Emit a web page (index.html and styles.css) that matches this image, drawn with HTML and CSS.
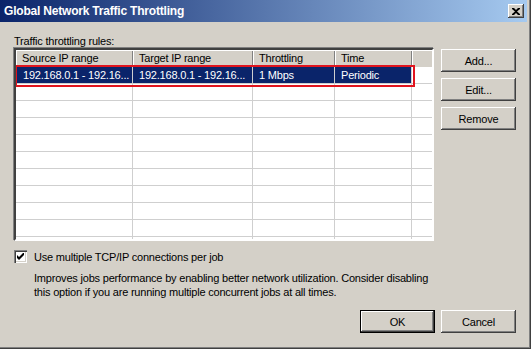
FILE: index.html
```html
<!DOCTYPE html>
<html lang="en">
<head>
  <meta charset="UTF-8" />
  <title>Global Network Traffic Throttling</title>
  <link rel="stylesheet" href="styles.css">
</head>
<body>
  <div class="window">
    <div class="titlebar">
      <span class="title">Global Network Traffic Throttling</span>
      <span class="close-btn">
        <svg width="8" height="7" viewBox="0 0 8 7"><path d="M0 0h2l2 2 2-2h2v1L5 3.5 8 6v1H6L4 5 2 7H0V6l3-2.5L0 1z" fill="#000"/></svg>
      </span>
    </div>

    <div class="content">
      <div class="caption">Traffic throttling rules:</div>

      <div class="rules">
        <div class="listview">
          <div class="row head">
            <div class="cell c1">Source IP range</div>
            <div class="cell c2">Target IP range</div>
            <div class="cell c3">Throttling</div>
            <div class="cell c4">Time</div>
            <div class="cell c5"></div>
          </div>
          <div class="row selected">
            <div class="cell c1">192.168.0.1 - 192.16...</div>
            <div class="cell c2">192.168.0.1 - 192.16...</div>
            <div class="cell c3">1 Mbps</div>
            <div class="cell c4">Periodic</div>
            <div class="cell c5"></div>
          </div>
          <div id="empty-rows"></div>
          <div class="highlight"></div>
        </div>

        <div class="side-buttons">
          <button class="btn">Add...</button>
          <button class="btn">Edit...</button>
          <button class="btn">Remove</button>
        </div>
      </div>

      <label class="option">
        <span class="checkbox">
          <svg width="7" height="7" viewBox="0 0 7 7"><path d="M0 2l2 2 5-5v2L2 6 0 4z" fill="#000"/><path d="M0 3l2 2 5-5v2L2 7 0 5z" fill="#000"/></svg>
        </span>
        Use multiple TCP/IP connections per job
      </label>
      <p class="desc">Improves jobs performance by enabling better network utilization. Consider disabling<br>this option if you are running multiple concurrent jobs at all times.</p>

      <div class="footer">
        <button class="btn default">OK</button>
        <button class="btn">Cancel</button>
      </div>
    </div>
  </div>

  <script>
    // empty grid rows under the rule list
    const holder = document.getElementById("empty-rows");
    for (let i = 0; i < 11; i++) {
      const row = document.createElement("div");
      row.className = "row";
      for (let c = 1; c <= 5; c++) {
        const cell = document.createElement("div");
        cell.className = "cell c" + c;
        row.appendChild(cell);
      }
      holder.appendChild(row);
    }
  </script>
</body>
</html>
```

FILE: styles.css
```css
* {
  box-sizing: border-box;
  margin: 0;
  padding: 0;
}
body {
  width: 531px;
  height: 349px;
  overflow: hidden;
  background: #d4d0c8;
  font-family: 'Liberation Sans', Arial, sans-serif;
  font-size: 11px;
  color: #000;
}
.window {
  width: 531px;
  height: 349px;
  background: #d4d0c8;
  padding: 0 4px 4px 0;
  box-shadow: inset -1px -1px #404040, inset -2px -2px #808080;
  display: flex;
  flex-direction: column;
}
.titlebar {
  height: 22px;
  background: linear-gradient(to right, #0a246a, #a6caf0);
  display: flex;
  align-items: center;
  justify-content: space-between;
  padding: 0 3px 0 4px;
}
.title {
  color: #fff;
  font-weight: bold;
  font-size: 12px;
  letter-spacing: -0.2px;
}
.close-btn {
  width: 16px;
  height: 14px;
  background: #d4d0c8;
  display: flex;
  align-items: center;
  justify-content: center;
  box-shadow: inset -1px -1px #404040, inset 1px 1px #fff, inset -2px -2px #808080;
}
.content {
  padding: 12px 0 0 14px;
  flex: 1;
  display: flex;
  flex-direction: column;
  letter-spacing: -0.2px;
}
.caption {
  height: 14px;
  line-height: 14px;
}
.rules {
  display: flex;
  gap: 7px;
}
.listview {
  position: relative;
  width: 420px;
  height: 193px;
  background: #fff;
  border-top: 2px solid #404040;
  border-left: 2px solid #404040;
  border-right: 2px solid #fff;
  border-bottom: 2px solid #fff;
  box-shadow: -1px -1px #808080, 1px 1px #d4d0c8;
  overflow: hidden;
}
.row {
  display: flex;
  height: 17px;
}
.cell {
  height: 17px;
  line-height: 16px;
  padding-left: 6px;
  border-right: 1px solid #cfcfcf;
  border-bottom: 1px solid #cfcfcf;
  white-space: nowrap;
  overflow: hidden;
}
.c1 { width: 117px; }
.c2 { width: 120px; }
.c3 { width: 82px; }
.c4 { width: 77px; }
.c5 { flex: 1; border-right: none; }
.head .cell {
  background: #d4d0c8;
  border: none;
  box-shadow: inset 1px 1px #fff, inset -1px -1px #808080;
  line-height: 17px;
}
.head .c5 {
  box-shadow: inset 1px 1px #fff;
}
.selected .c1,
.selected .c2,
.selected .c3,
.selected .c4 {
  background: #0a246a;
  color: #fff;
}
.selected .c1 {
  margin-left: 1px;
  width: 116px;
}
.highlight {
  position: absolute;
  left: -1px;
  top: 15px;
  width: 400px;
  height: 22px;
  border: 2px solid #e0141e;
}
.side-buttons {
  display: flex;
  flex-direction: column;
  gap: 6px;
  margin-top: 1px;
}
.btn {
  width: 75px;
  height: 23px;
  background: #d4d0c8;
  border: none;
  font-family: inherit;
  font-size: 11px;
  letter-spacing: -0.2px;
  color: #000;
  box-shadow: inset -1px -1px #404040, inset 1px 1px #fff, inset -2px -2px #808080;
}
.btn.default {
  box-shadow: inset 0 0 0 1px #000, inset -2px -2px #404040, inset 2px 2px #fff, inset -3px -3px #808080;
}
.option {
  display: flex;
  align-items: center;
  gap: 7px;
  margin-top: 9px;
  height: 13px;
}
.checkbox {
  width: 13px;
  height: 13px;
  background: #fff;
  display: flex;
  align-items: center;
  justify-content: center;
  box-shadow: inset 1px 1px #808080, inset 2px 2px #404040, inset -1px -1px #fff, inset -2px -2px #d4d0c8;
}
.desc {
  margin: 8px 0 0 20px;
  line-height: 14px;
}
.footer {
  display: flex;
  justify-content: flex-end;
  gap: 6px;
  padding-right: 11px;
  margin-top: 11px;
}
```
